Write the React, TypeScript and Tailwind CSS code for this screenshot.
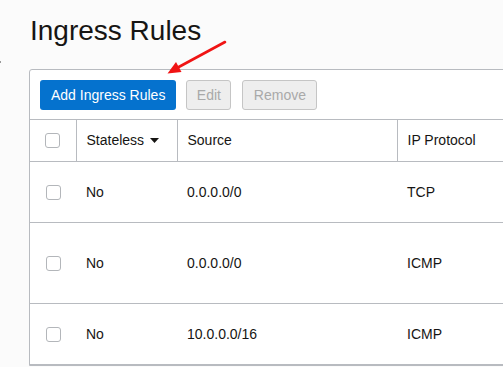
import { useState } from 'react';

type Rule = {
  stateless: string;
  source: string;
  protocol: string;
  height: string;
};

const rules: Rule[] = [
  { stateless: 'No', source: '0.0.0.0/0', protocol: 'TCP', height: 'h-[61px]' },
  { stateless: 'No', source: '0.0.0.0/0', protocol: 'ICMP', height: 'h-[81px]' },
  { stateless: 'No', source: '10.0.0.0/16', protocol: 'ICMP', height: 'h-[61px]' },
];

const Checkbox = () => (
  <span className="block w-[15px] h-[15px] rounded-[3px] border border-[#b3b6ba] bg-white mx-auto" />
);

const App = () => {
  const [selected] = useState<number[]>([]);

  return (
    <div
      className="relative h-[367px] w-[503px] overflow-hidden bg-[#fbfbfb] text-[#161513]"
      style={{ fontFamily: '"Liberation Sans", Arial, sans-serif' }}
    >
      {/* left rail marker */}
      <div className="absolute left-0 top-[61px] h-[2px] w-[1px] bg-[#9a9a9a]" />

      <div className="pl-[29px] pt-[13px]">
        <h1 className="text-[28px] leading-[36px] font-normal pl-[1px]">Ingress Rules</h1>

        <div className="mt-[20px] w-[560px] bg-white border border-[#b8bbc0] rounded-tl-[3px]">
          {/* Toolbar */}
          <div className="flex items-center gap-[10px] p-[10px] pb-[9px]">
            <button className="h-[30px] px-[11px] rounded-[3px] bg-[#0572ce] text-white text-[14px]">
              Add Ingress Rules
            </button>
            <button
              disabled
              className="h-[30px] w-[45px] rounded-[3px] border border-[#c5c5c5] bg-[#eeeeee] text-[#a9a9a9] text-[14px]"
            >
              Edit
            </button>
            <button
              disabled
              className="ml-[1px] h-[30px] w-[75px] rounded-[3px] border border-[#c5c5c5] bg-[#eeeeee] text-[#a9a9a9] text-[14px]"
            >
              Remove
            </button>
          </div>

          {/* Table */}
          <table className="w-full border-collapse text-[14px] table-fixed">
            <colgroup>
              <col className="w-[46px]" />
              <col className="w-[101px]" />
              <col className="w-[220px]" />
              <col />
            </colgroup>
            <thead>
              <tr className="h-[42px] border-y border-[#b8bbc0]">
                <th className="border-r border-[#b8bbc0] p-0">
                  <Checkbox />
                </th>
                <th className="border-r border-[#b8bbc0] pl-[10px] text-left font-normal">
                  <span className="inline-flex items-center gap-[6px]">
                    Stateless
                    <svg width="9" height="5" viewBox="0 0 9 5">
                      <path d="M0 0h9L4.5 5z" fill="#161513" />
                    </svg>
                  </span>
                </th>
                <th className="border-r border-[#b8bbc0] pl-[10px] text-left font-normal">Source</th>
                <th className="pl-[10px] text-left font-normal">IP Protocol</th>
              </tr>
            </thead>
            <tbody>
              {rules.map((rule, i) => (
                <tr key={i} className={`${rule.height} border-b border-[#b8bbc0]`}>
                  <td className="p-0">{selected.includes(i) ? <Checkbox /> : <Checkbox />}</td>
                  <td className="pl-[10px]">{rule.stateless}</td>
                  <td className="pl-[10px]">{rule.source}</td>
                  <td className="pl-[10px]">{rule.protocol}</td>
                </tr>
              ))}
            </tbody>
          </table>
        </div>
      </div>

      {/* Red annotation arrow */}
      <svg className="absolute left-0 top-0 pointer-events-none" width="503" height="367">
        <line x1="225" y1="42" x2="176" y2="68.5" stroke="#f01414" strokeWidth="2.6" strokeLinecap="round" />
        <path d="M167.5 73.5 L181.5 72 L176 62 Z" fill="#f01414" />
      </svg>
    </div>
  );
};

export default App;
